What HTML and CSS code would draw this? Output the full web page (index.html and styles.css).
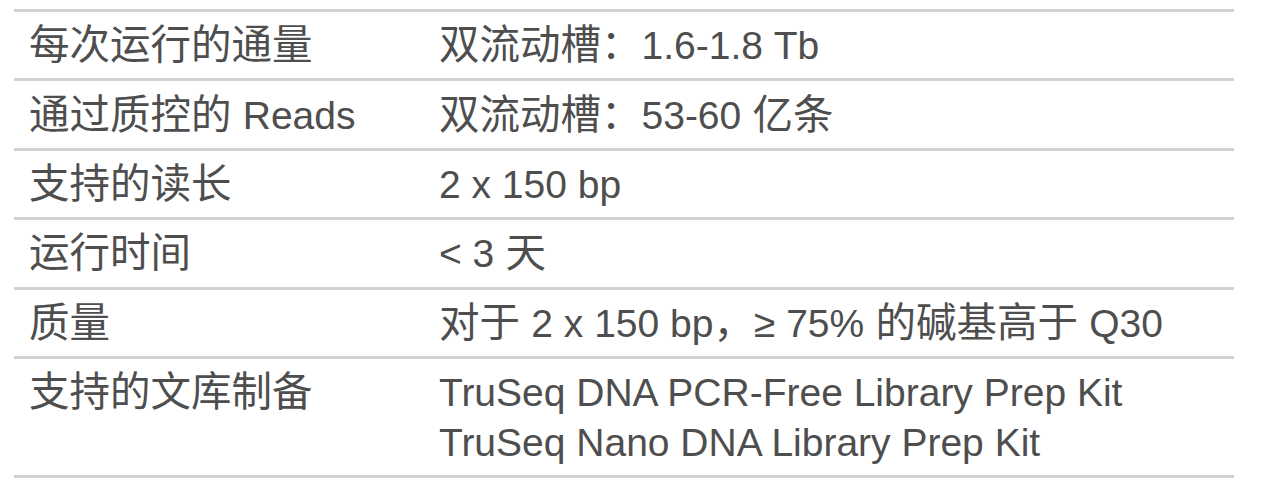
FILE: index.html
```
<!DOCTYPE html>
<html lang="zh-CN">
<head>
<meta charset="utf-8">
<title>规格</title>
<link rel="stylesheet" href="styles.css">
</head>
<body>
<div class="spec">
  <div class="row">
    <div class="label">每次运行的通量</div>
    <div class="value">双流动槽：<span class="en">1.6-1.8 Tb</span></div>
  </div>
  <div class="row">
    <div class="label">通过质控的 <span class="en">Reads</span></div>
    <div class="value">双流动槽：<span class="en">53-60</span> 亿条</div>
  </div>
  <div class="row">
    <div class="label">支持的读长</div>
    <div class="value"><span class="en">2 x 150 bp</span></div>
  </div>
  <div class="row">
    <div class="label">运行时间</div>
    <div class="value"><span class="en">&lt; 3</span> 天</div>
  </div>
  <div class="row">
    <div class="label">质量</div>
    <div class="value">对于 <span class="en">2 x 150 bp</span>，<span class="en">≥ 75%</span> 的碱基高于 <span class="en">Q30</span></div>
  </div>
  <div class="row">
    <div class="label">支持的文库制备</div>
    <div class="value"><span class="en">TruSeq DNA PCR-Free Library Prep Kit</span><br><span class="en">TruSeq Nano DNA Library Prep Kit</span></div>
  </div>
</div>
</body>
</html>
```
FILE: styles.css
```
html, body {
  margin: 0;
  padding: 0;
  background: #ffffff;
}

body {
  font-family: "Liberation Sans", "Noto Sans CJK SC", sans-serif;
  color: #4e4e4e;
}

.spec {
  margin: 9px 0 0 14px;
  width: 1220px;
  border-top: 3px solid #d2d2d2;
}

.row {
  display: grid;
  grid-template-columns: 425px 1fr;
  padding: 8.2px 0;
  border-bottom: 3px solid #d2d2d2;
  font-size: 40.5px;
  line-height: 50px;
}

.label,
.value {
  height: auto;
}

.label {
  padding-left: 15px;
}

.en {
  font-size: 39px;
  line-height: 1;
}
```
